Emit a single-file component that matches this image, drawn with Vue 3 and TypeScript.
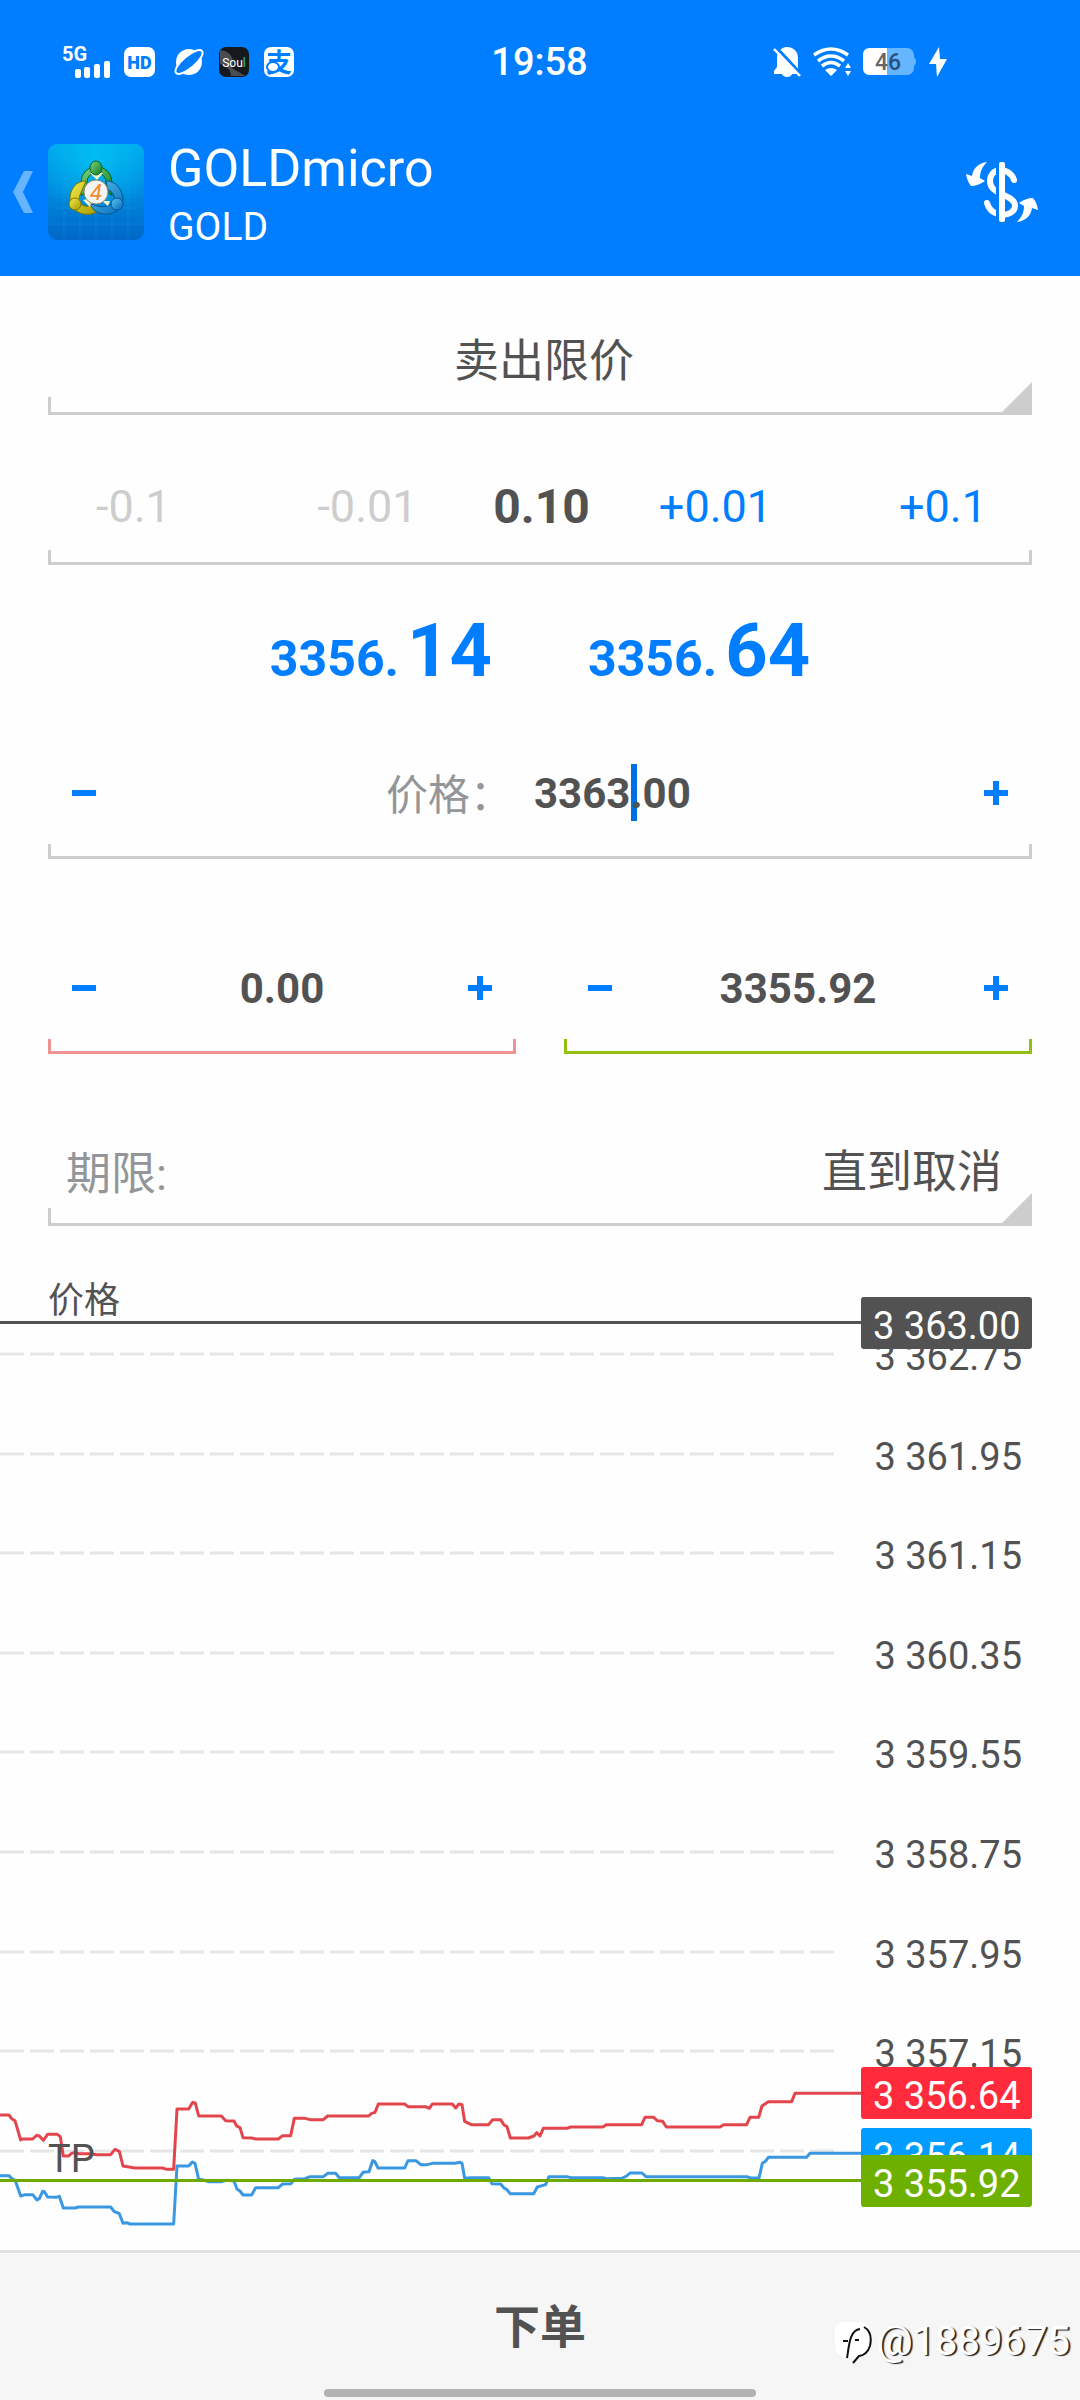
<script setup lang="ts">
import { ref } from 'vue'

interface GridLine { y: number; label: string }

const orderType = ref('卖出限价')
const volume = ref('0.10')
const price = ref('3363.00')
const stopLoss = ref('0.00')
const takeProfit = ref('3355.92')
const expiration = ref('直到取消')

const quotes = [
  { id: 'bid', whole: '3356.', cents: '14' },
  { id: 'ask', whole: '3356.', cents: '64' },
]

const gridLines: GridLine[] = [
  { y: 104, label: '3 362.75' },
  { y: 204, label: '3 361.95' },
  { y: 303, label: '3 361.15' },
  { y: 403, label: '3 360.35' },
  { y: 502, label: '3 359.55' },
  { y: 602, label: '3 358.75' },
  { y: 702, label: '3 357.95' },
  { y: 801, label: '3 357.15' },
  { y: 901, label: '' },
]

// Tick series, in thirds of a chart unit
const askSeries =
  '0,255 27,255 35,266 45,272 62,330 68,327 98,327 110,316 118,318 130,331 143,313 172,313 181,320 190,378 205,378 215,370 225,367 235,371 272,371 290,374 332,374 345,358 358,364 369,408 405,414 487,414 500,418 521,418 531,237 566,237 578,217 586,219 596,258 664,258 677,272 702,273 710,288 720,293 729,323 755,324 768,327 835,327 848,317 872,317 883,265 915,265 930,269 970,269 983,258 1106,258 1115,250 1125,247 1135,222 1214,222 1224,230 1276,230 1288,235 1297,222 1357,222 1367,234 1377,222 1386,224 1394,274 1414,284 1466,284 1478,269 1502,269 1512,285 1521,290 1531,324 1585,324 1602,318 1610,308 1620,318 1630,295 1700,295 1712,291 1808,291 1820,284 1925,284 1935,262 1961,262 1972,272 1988,274 1999,291 2160,291 2171,284 2240,284 2250,262 2276,262 2286,228 2305,215 2375,215 2385,190 2583,190'
const bidSeries =
  '0,437 27,437 35,445 46,452 62,498 75,494 98,494 111,510 118,506 128,484 133,485 143,501 168,502 178,499 190,534 225,534 235,531 332,531 342,544 358,551 369,580 380,578 390,582 521,582 531,408 566,408 577,396 585,400 596,448 610,450 625,455 665,455 680,451 702,453 711,477 720,483 729,495 755,495 767,473 835,473 848,462 873,461 883,448 915,446 930,440 970,440 983,430 1007,430 1018,443 1078,443 1089,427 1107,425 1118,392 1124,394 1134,414 1214,414 1224,392 1248,392 1262,404 1282,404 1297,400 1365,400 1380,397 1386,400 1394,445 1414,443 1466,443 1476,461 1502,462 1512,474 1521,479 1531,491 1601,491 1612,471 1637,464 1647,440 1700,440 1712,443 1808,443 1820,446 1865,445 1880,438 1890,429 1926,429 1938,440 2240,440 2252,444 2277,444 2287,400 2297,393 2305,382 2420,382 2430,370 2583,370'

const tags = [
  { label: '3 363.00', y: 73, color: '#525252' },
  { label: '3 356.64', y: 843, color: '#ff2a3c' },
  { label: '3 356.14', y: 904, color: '#009cff' },
  { label: '3 355.92', y: 931, color: '#6eb000' },
]

function shift(value: string, delta: number): string {
  return Math.max(0, Number(value) + delta).toFixed(2)
}
</script>

<template>
  <div class="page">
    <header class="header">
      <div class="status">
        <div class="status-left">
          <svg class="signal" width="50" height="34" viewBox="0 0 50 34">
            <text x="0" y="16" class="net">5G</text>
            <g fill="#fff">
              <rect x="13" y="24" width="6" height="9" rx="2" />
              <rect x="22" y="22" width="6" height="11" rx="2" />
              <rect x="32" y="19" width="6" height="14" rx="2" />
              <rect x="42" y="16" width="6" height="17" rx="2" />
            </g>
          </svg>
          <svg class="hd" width="31" height="30" viewBox="0 0 31 30">
            <rect width="31" height="30" rx="7" fill="#fff" />
            <text x="15.500" y="22" text-anchor="middle" class="hd-text">HD</text>
          </svg>
          <svg class="planet" width="30" height="30" viewBox="0 0 30 30">
            <circle cx="15" cy="15" r="13" fill="#fff" />
            <ellipse cx="15" cy="15" rx="17" ry="6" transform="rotate(-40 15 15)" fill="#007eff" stroke="#fff" stroke-width="2" />
          </svg>
          <svg width="30" height="30" viewBox="0 0 30 30">
            <rect width="30" height="30" rx="7" fill="#15191d" />
            <path d="M1 3C12 4 16 12 13 21C19 25 24 27 26 29H12C12 23 8 19 1 17Z" fill="#4a4e52" />
            <text x="15" y="20" text-anchor="middle" class="soul">Sou<tspan fill="#1fc8ae">l</tspan></text>
          </svg>
          <svg width="30" height="30" viewBox="0 0 30 30">
            <rect width="30" height="30" rx="7" fill="#fff" />
            <text x="15" y="25" text-anchor="middle" class="pay">支</text>
            <ellipse cx="9" cy="20" rx="6" ry="5" fill="#fff" stroke="#007eff" stroke-width="2" />
          </svg>
        </div>
        <time class="clock">19:58</time>
        <div class="status-right">
          <svg width="28" height="32" viewBox="0 0 28 32">
            <path d="M14 1C8 1 4 6 4 12V21L1 25V28H9C10 32 18 32 19 28H24L25 21V12C25 5 20 1 14 1Z" fill="#fff" />
            <path d="M3 1L29 29" stroke="#007eff" stroke-width="3" />
            <path d="M1 3L27 30" stroke="#fff" stroke-width="2.500" />
          </svg>
          <svg width="38" height="30" viewBox="0 0 38 30">
            <g fill="none" stroke="#fff" stroke-width="3.500">
              <path d="M1 8Q18 -4 35 8" />
              <path d="M5 14Q18 4 31 14" />
              <path d="M9 19Q18 12 27 19" />
            </g>
            <path d="M12 23Q18 19 24 23L18 29Z M32 21L35 16L38 21Z M32 24H38L35 29Z" fill="#fff" />
          </svg>
          <svg width="54" height="28" viewBox="0 0 54 28">
            <path d="M50 9C54 9 54 18 50 18Z" fill="#66b5ff" />
            <rect width="51" height="27" rx="7" fill="#66b5ff" />
            <path d="M7 0H24V27H7Q0 27 0 20V7Q0 0 7 0Z" fill="#fff" />
            <text x="12" y="22" class="battery" fill="#666">4<tspan fill="#28527d">6</tspan></text>
          </svg>
          <svg width="18" height="30" viewBox="0 0 18 30">
            <path d="M10 0L0 17H7L8 30L18 12H11Z" fill="#fff" />
          </svg>
        </div>
      </div>

      <div class="appbar">
        <button class="back" type="button" aria-label="Back">
          <svg width="20" height="42" viewBox="0 0 20 42">
            <path d="M11 0H20L10 21L20 42H11L0 21Z" fill="#66b5ff" />
          </svg>
        </button>
        <svg class="logo" width="96" height="96" viewBox="0 0 96 96">
          <defs>
            <linearGradient id="sky" x1="0" y1="0" x2="0" y2="1">
              <stop offset="0" stop-color="#00a9ee" />
              <stop offset="0.500" stop-color="#008ade" />
              <stop offset="1" stop-color="#0067c8" />
            </linearGradient>
            <radialGradient id="glow" cx="0.500" cy="0.150" r="0.600">
              <stop offset="0" stop-color="#00c4f4" stop-opacity="0.800" />
              <stop offset="1" stop-color="#00c4f4" stop-opacity="0" />
            </radialGradient>
            <linearGradient id="green" x1="0" y1="0" x2="1" y2="1">
              <stop offset="0" stop-color="#7fd77c" /><stop offset="1" stop-color="#0b7a27" />
            </linearGradient>
            <linearGradient id="yellow" x1="0" y1="0" x2="1" y2="1">
              <stop offset="0" stop-color="#f4ec4a" /><stop offset="1" stop-color="#a69a00" />
            </linearGradient>
            <linearGradient id="blue" x1="0" y1="0" x2="1" y2="1">
              <stop offset="0" stop-color="#5cc8f6" /><stop offset="1" stop-color="#0369b8" />
            </linearGradient>
          </defs>
          <rect width="96" height="96" rx="9" fill="url(#sky)" />
          <rect width="96" height="96" rx="9" fill="url(#glow)" />
          <path d="M16 2V94M32 2V94M48 2V94M64 2V94M80 2V94M2 16H94M2 32H94M2 48H94M2 64H94M2 80H94" stroke="#3fb4f2" stroke-opacity="0.180" fill="none" />
          <path d="M33 52V38A15 15 0 0 1 64 38V52L58 46V38A9 9 0 0 0 39 38V46Z" fill="url(#green)" stroke="#0a6424" />
          <path d="M38 37C28 37 22 45 22 55C23 68 37 74 49 68L43 61C36 65 29 59 32 51Z" fill="url(#yellow)" stroke="#7d7500" />
          <path d="M58 37C68 37 74 45 75 55C74 69 58 75 46 66L40 58C49 64 61 65 66 57C67 51 64 47 60 46Z" fill="url(#blue)" stroke="#055593" />
          <path d="M35 56L42 63L44 54ZM54 57L62 57L60 62ZM42 29L55 29L49 36Z" fill="#eef7c8" />
          <ellipse cx="48" cy="24" rx="6" ry="7" fill="url(#green)" stroke="#0a6424" />
          <circle cx="27" cy="60" r="6" fill="url(#yellow)" stroke="#7d7500" />
          <circle cx="69" cy="60" r="6" fill="url(#blue)" stroke="#055593" />
          <circle cx="48" cy="48" r="12" fill="#f4f4f4" stroke="#8a8a6a" />
          <text x="48" y="56" text-anchor="middle" class="four">4</text>
        </svg>
        <div class="titles">
          <h1 class="symbol">GOLDmicro</h1>
          <p class="desc">GOLD</p>
        </div>
        <button class="trade" type="button" aria-label="Trade">
          <svg width="72" height="60" viewBox="0 0 72 60">
            <path d="M48 18C46 11 39 8 35 8C28 8 24 13 24 19C24 26 29 29 35 32C43 35 49 38 49 44C49 50 42 53 36 53C28 52 23 48 21 41" fill="none" stroke="#fff" stroke-width="6" stroke-linecap="round" />
            <rect x="30" y="4" width="3" height="54" fill="#007eff" />
            <rect x="33" y="0" width="6" height="60" rx="2" fill="#fff" />
            <path d="M21 0C13 1 7 6 6 14L0 12Q1 19 5 24Q12 24 19 19L14 16C14 10 16 5 21 0Z" fill="#fff" />
            <path transform="rotate(180 36 30)" d="M21 0C13 1 7 6 6 14L0 12Q1 19 5 24Q12 24 19 19L14 16C14 10 16 5 21 0Z" fill="#fff" />
          </svg>
        </button>
      </div>
    </header>

    <main class="main">
      <form class="form" @submit.prevent>
        <div class="field drop first">
          <select v-model="orderType" class="select type" aria-label="订单类型">
            <option>卖出限价</option>
          </select>
        </div>

        <div class="field volume">
          <button type="button" class="step outer left" disabled>-0.1</button>
          <button type="button" class="step" disabled>-0.01</button>
          <input v-model="volume" class="value lots" aria-label="手数" />
          <button type="button" class="step plus" @click="volume = shift(volume, 0.01)">+0.01</button>
          <button type="button" class="step outer right plus" @click="volume = shift(volume, 0.1)">+0.1</button>
        </div>

        <div class="quotes">
          <p v-for="q in quotes" :key="q.id" class="quote">
            {{ q.whole }}<strong class="cents">{{ q.cents }}</strong>
          </p>
        </div>

        <div class="field stepper">
          <button type="button" class="sign" aria-label="减少价格" @click="price = shift(price, -0.01)">
            <svg width="24" height="24" viewBox="0 0 24 24"><path d="M0 12H24" /></svg>
          </button>
          <div class="price">
            <label for="price" class="caption">价格：</label>
            <span class="edit">
              <span class="caret"></span>
              <input id="price" v-model="price" class="value price-value" />
            </span>
          </div>
          <button type="button" class="sign" aria-label="增加价格" @click="price = shift(price, 0.01)">
            <svg width="24" height="24" viewBox="0 0 24 24"><path d="M0 12H24M12 0V24" /></svg>
          </button>
        </div>

        <div class="pair">
          <div class="field stepper loss">
            <button type="button" class="sign" aria-label="减少止损" @click="stopLoss = shift(stopLoss, -0.01)">
              <svg width="24" height="24" viewBox="0 0 24 24"><path d="M0 12H24" /></svg>
            </button>
            <input v-model="stopLoss" class="value" aria-label="止损" />
            <button type="button" class="sign" aria-label="增加止损" @click="stopLoss = shift(stopLoss, 0.01)">
              <svg width="24" height="24" viewBox="0 0 24 24"><path d="M0 12H24M12 0V24" /></svg>
            </button>
          </div>
          <div class="field stepper profit">
            <button type="button" class="sign" aria-label="减少止盈" @click="takeProfit = shift(takeProfit, -0.01)">
              <svg width="24" height="24" viewBox="0 0 24 24"><path d="M0 12H24" /></svg>
            </button>
            <input v-model="takeProfit" class="value" aria-label="止盈" />
            <button type="button" class="sign" aria-label="增加止盈" @click="takeProfit = shift(takeProfit, 0.01)">
              <svg width="24" height="24" viewBox="0 0 24 24"><path d="M0 12H24M12 0V24" /></svg>
            </button>
          </div>
        </div>

        <div class="field drop term">
          <label for="term" class="term-label">期限:</label>
          <select id="term" v-model="expiration" class="select until">
            <option>直到取消</option>
          </select>
        </div>
      </form>

      <svg class="chart" viewBox="0 0 1080 1000">
        <g v-for="g in gridLines" :key="g.y">
          <line x1="0" :y1="g.y" x2="834" :y2="g.y" class="grid" />
          <text v-if="g.label" x="1022" :y="g.y + 16" class="axis">{{ g.label }}</text>
        </g>
        <g class="series" transform="translate(0 780) scale(0.33333)">
          <polyline :points="askSeries" stroke="#e2464c" />
          <polyline :points="bidSeries" stroke="#3a98e2" />
        </g>
        <text x="48" y="63" class="note cn">价格</text>
        <text x="48" y="922" class="note">TP</text>
        <line x1="0" y1="72.500" x2="861" y2="72.500" stroke="#525252" stroke-width="3" />
        <line x1="0" y1="930.500" x2="861" y2="930.500" stroke="#6eaa00" stroke-width="3" />
        <g v-for="t in tags" :key="t.label">
          <rect x="861" :y="t.y - 26" width="171" height="52" rx="3" :fill="t.color" />
          <text x="873" :y="t.y + 16" class="tag">{{ t.label }}</text>
        </g>
      </svg>
    </main>

    <footer class="footer">
      <button type="button" class="submit">下单</button>
      <div class="home"></div>
      <div class="watermark">
        <svg width="40" height="44" viewBox="0 0 40 44">
          <path d="M2 10Q3 2 12 2H27Q38 3 38 14V24Q37 35 27 37L20 43L18 37H12Q2 35 2 27Z" fill="#fff" />
          <path d="M14 38C16 28 16 10 27 9M10 21H15M22 20H26M31 7Q40 12 37 26Q34 35 26 36L20 43" fill="none" stroke="#111" stroke-width="2" />
        </svg>
        <span>@1889675</span>
      </div>
    </footer>
  </div>
</template>

<style>
html,
body {
  background: #fff;
}
</style>

<style scoped>
.page {
  display: flex;
  flex-direction: column;
  min-height: 100vh;
  background: #fefefe;
  color: #525252;
  font-family: Roboto, "Noto Sans CJK SC", sans-serif;
}
button,
input,
select {
  margin: 0;
  padding: 0;
  border: 0;
  outline: 0;
  background: transparent;
  color: inherit;
  font: inherit;
  appearance: none;
}
svg {
  display: block;
}
h1,
p {
  margin: 0;
  font-weight: 400;
}

.header {
  background: #007eff;
  color: #fff;
}
.status {
  display: grid;
  grid-template-columns: 1fr auto 1fr;
  align-items: center;
  height: 92px;
  padding: 16px 133px 0 62px;
}
.status-left,
.status-right {
  display: flex;
  align-items: center;
}
.status-left {
  gap: 15px;
}
.signal {
  overflow: visible;
}
.hd {
  margin-left: -3px;
}
.planet {
  margin-left: 4px;
  overflow: visible;
}
.status-right {
  justify-content: flex-end;
  gap: 12px;
}
.clock {
  margin-left: 70px;
  font-size: 38px;
  line-height: 44px;
  font-weight: 500;
}
.net {
  fill: #fff;
  font-size: 20px;
  font-weight: 700;
}
.hd-text {
  fill: #007eff;
  font-size: 18px;
  font-weight: 900;
}
.soul {
  fill: #fff;
  font-size: 12px;
}
.pay {
  fill: #007eff;
  font-size: 26px;
  font-weight: 700;
}
.battery {
  font-size: 23px;
  font-weight: 500;
}
.four {
  fill: #f28a2e;
  font-size: 22px;
  font-style: italic;
}

.appbar {
  display: flex;
  align-items: center;
  height: 168px;
}
.back {
  width: 48px;
  padding-left: 13px;
}
.titles {
  flex: 1;
  padding: 8px 0 0 24px;
}
.symbol {
  font-size: 52px;
  line-height: 62px;
}
.desc {
  font-size: 39px;
  line-height: 54px;
}
.trade {
  padding: 0 42px;
}

.form {
  padding: 0 48px;
}
.field {
  --line: #cdcdcd;
  position: relative;
  display: flex;
  align-items: stretch;
  height: 132px;
}
.field::after {
  content: "";
  position: absolute;
  inset: auto 0 0 0;
  height: 12px;
  border: 3px solid var(--line);
  border-top: 0;
  pointer-events: none;
}
.drop {
  height: 108px;
}
.drop::after {
  height: 15px;
  border-right: 0;
}
.drop::before {
  content: "";
  position: absolute;
  right: 0;
  bottom: 0;
  width: 33px;
  height: 33px;
  background: var(--line);
  clip-path: polygon(100% 0, 100% 100%, 0 100%);
}
.first {
  margin-top: 31px;
}
.select {
  flex: 1;
  font-size: 45px;
}
.type {
  padding-left: 8px;
  text-align-last: center;
}
.until {
  padding-right: 30px;
  text-align-last: right;
}

.volume {
  height: 118px;
  margin-top: 32px;
}
.step {
  width: 174px;
  color: #cdcdcd;
  font-size: 45px;
}
.outer {
  flex: 1;
}
.left {
  padding-left: 48px;
  text-align: left;
}
.right {
  padding-right: 45px;
  text-align: right;
}
.plus {
  color: #007eff;
}
.value {
  min-width: 0;
  font-size: 42px;
  font-weight: 700;
  text-align: center;
}
.lots {
  width: 174px;
  font-size: 48px;
}

.quotes {
  display: flex;
  justify-content: center;
  gap: 96px;
  height: 120px;
  padding-top: 42px;
}
.quote {
  display: flex;
  align-items: baseline;
  color: #007eff;
  font-size: 50px;
  line-height: 88px;
  font-weight: 700;
}
.cents {
  padding-left: 8px;
  font-size: 74px;
  font-weight: 700;
}

.stepper {
  flex: 1;
  display: grid;
  grid-template-columns: 72px 1fr 72px;
}
.sign {
  display: flex;
  align-items: center;
  justify-content: center;
}
.sign path {
  stroke: #007eff;
  stroke-width: 6;
}
.price {
  display: flex;
  align-items: center;
  justify-content: center;
  gap: 22px;
  font-size: 42px;
}
.caption,
.term-label {
  padding-bottom: 4px;
  color: #939598;
}
.edit {
  position: relative;
}
.price-value {
  position: relative;
  width: 160px;
  text-align: left;
}
.caret {
  position: absolute;
  top: -5px;
  left: 97px;
  width: 6px;
  height: 57px;
  background: #0070e6;
}
.pair {
  display: flex;
  gap: 48px;
  margin: 63px 0 64px;
}
.loss {
  --line: #ee9294;
}
.profit {
  --line: #92bf10;
}
.term {
  align-items: center;
  padding-left: 18px;
}
.term-label {
  font-size: 45px;
}

.chart {
  width: 100%;
  height: auto;
  margin-top: 24px;
}
.grid {
  stroke: #e6e6e6;
  stroke-width: 3;
  stroke-dasharray: 24 6;
}
.axis {
  fill: #525252;
  font-size: 38px;
  text-anchor: end;
}
.series {
  fill: none;
  stroke-width: 9;
  stroke-linejoin: round;
}
.note {
  fill: #525252;
  font-size: 38px;
}
.cn {
  font-size: 36px;
}
.tag {
  fill: #fff;
  font-size: 38px;
}

.footer {
  position: relative;
  display: flex;
  flex-direction: column;
  align-items: center;
  flex: 1;
  min-height: 147px;
  border-top: 3px solid #e2e2e2;
  background: #f6f6f6;
}
.submit {
  width: 100%;
  flex: 1;
  padding-top: 4px;
  font-size: 46px;
  font-weight: 700;
}
.home {
  width: 40%;
  height: 8px;
  margin-bottom: 3px;
  border-radius: 4px;
  background: #b2b2b2;
}
.watermark {
  position: absolute;
  right: 10px;
  bottom: 36px;
  display: flex;
  align-items: center;
  gap: 4px;
  color: #fff;
  font-size: 40px;
  line-height: 44px;
  text-shadow: 2px 1px 1px #222;
}
</style>
